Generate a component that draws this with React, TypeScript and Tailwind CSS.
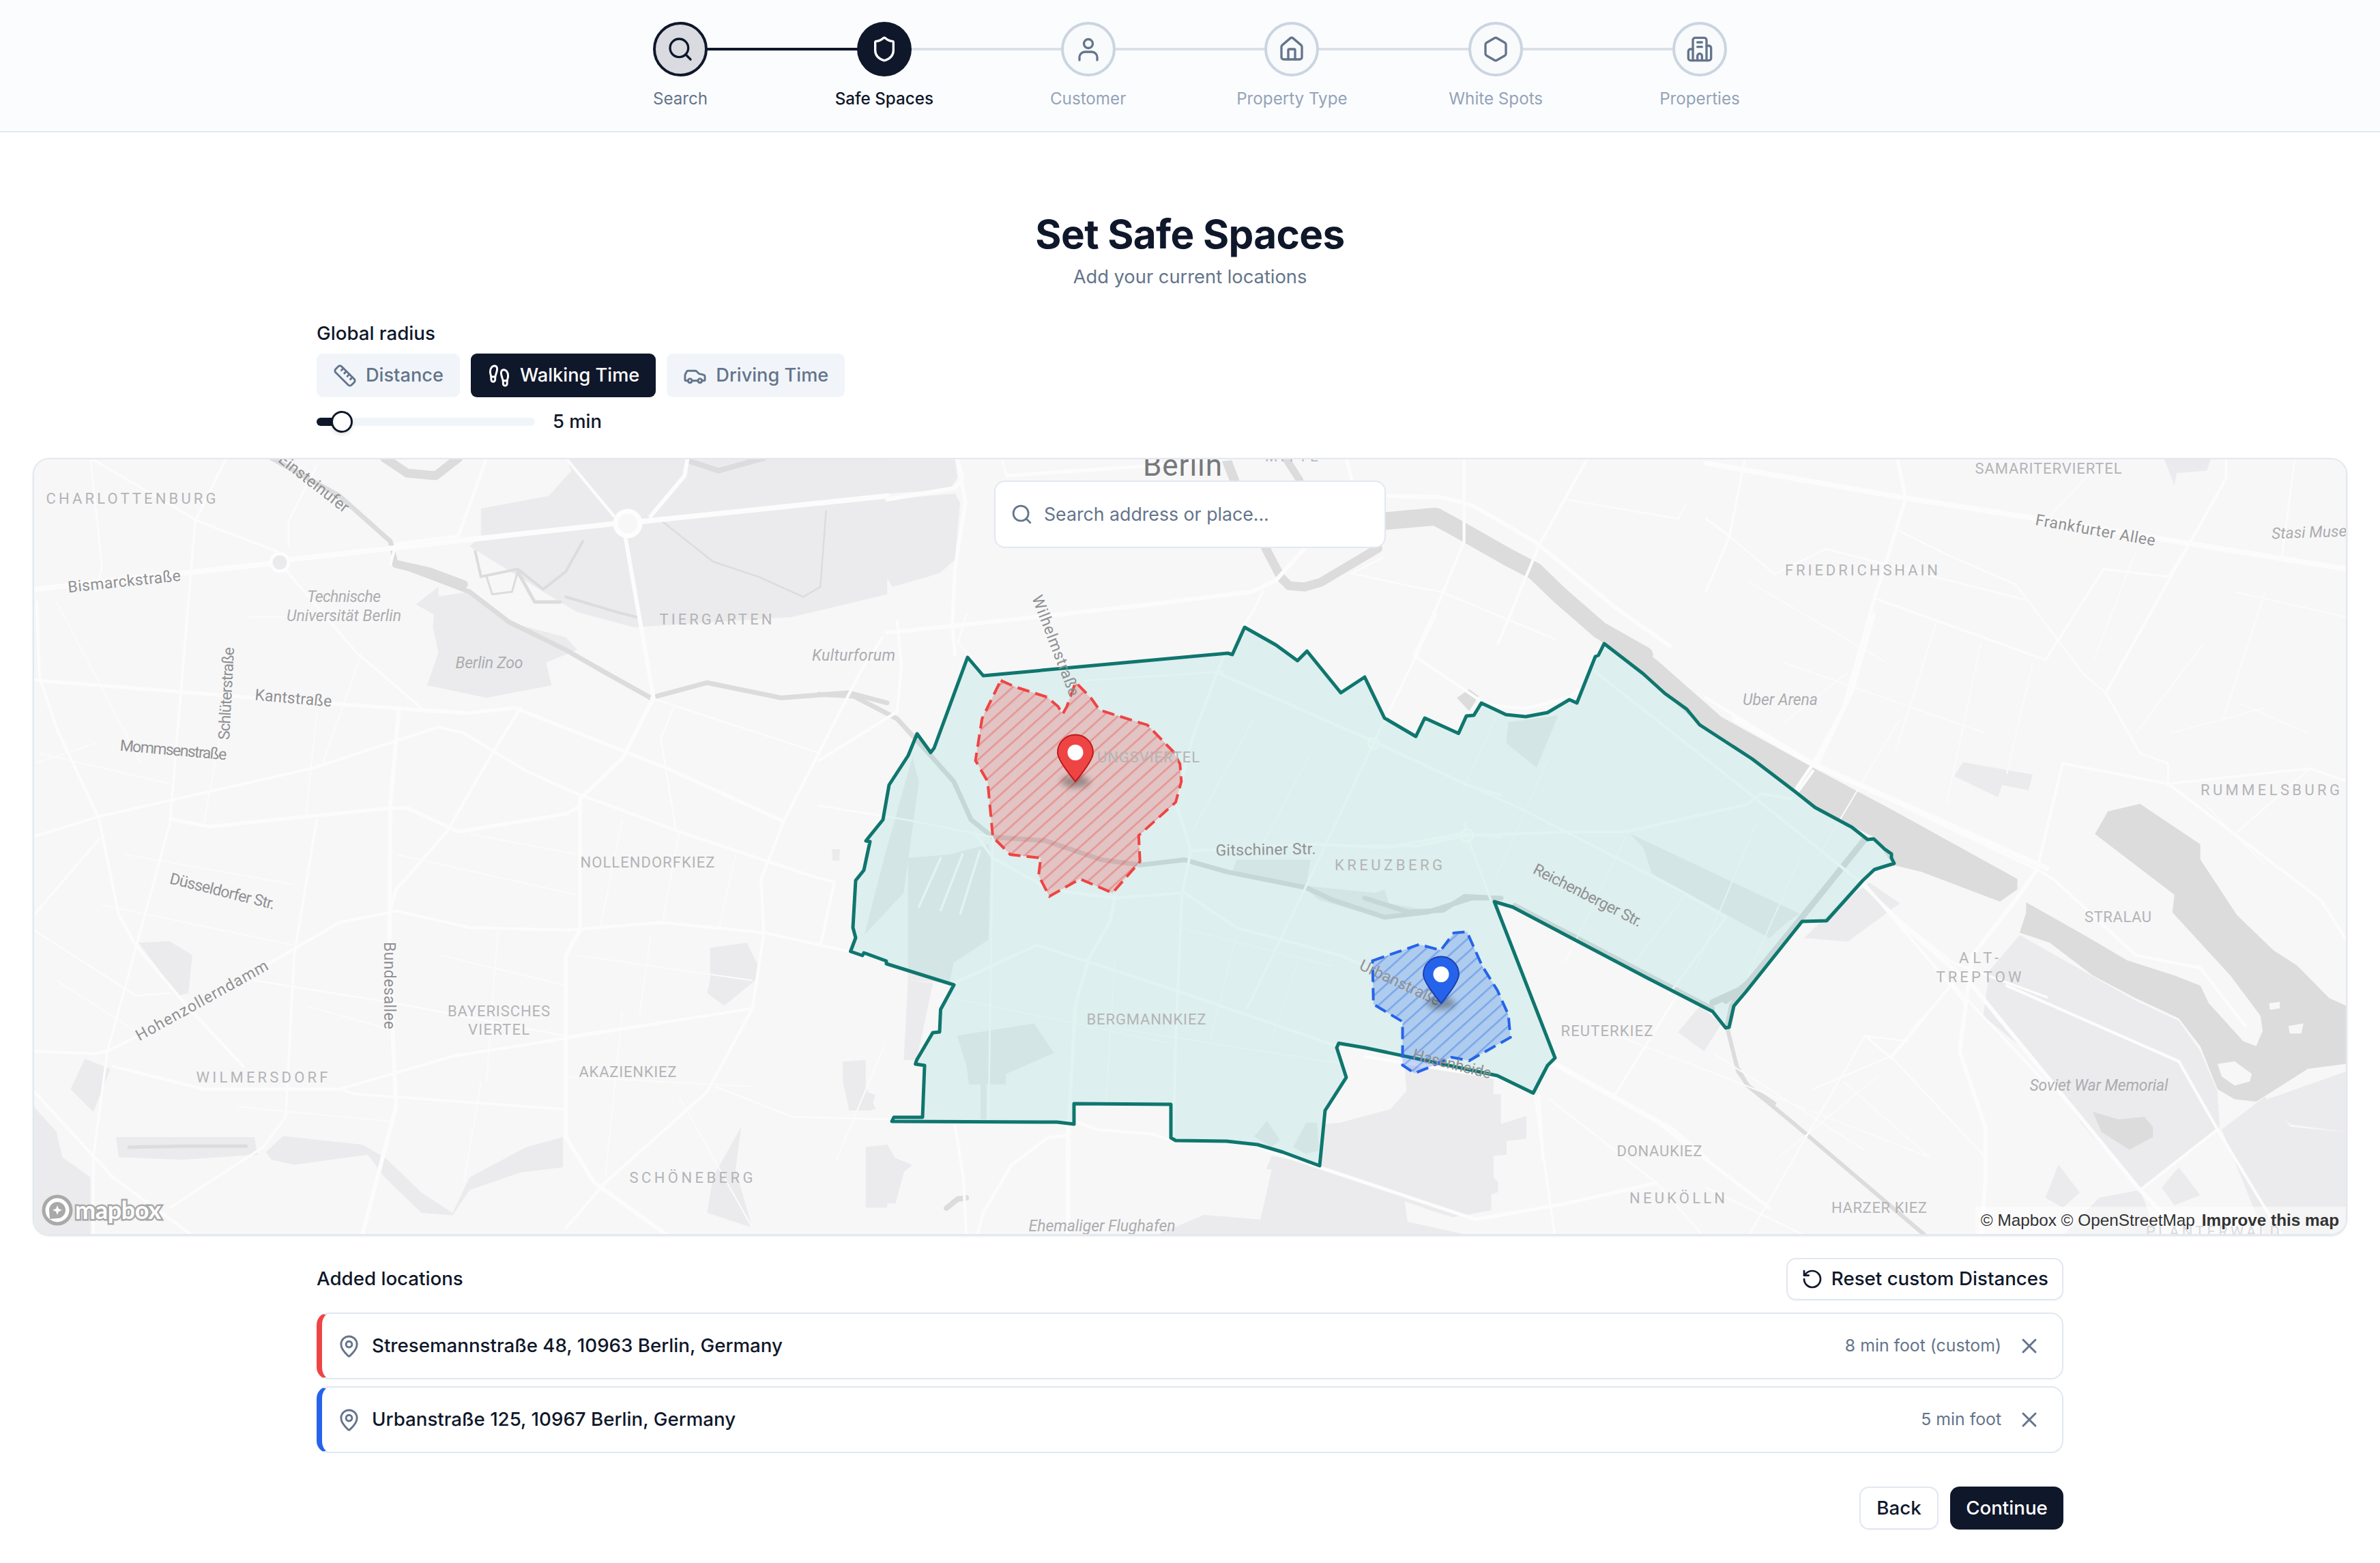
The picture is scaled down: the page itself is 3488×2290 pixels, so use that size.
import React from "react";
import { Car, Footprints, Hexagon, House, MapPin, RotateCcw, Ruler, Search, Shield, X } from "lucide-react";

// each zoomed crop of the map had its own scale, points are kept in those crop coordinates
const spaces: Record<string, number[]> = {
  w: [0, 660, 1.206, 1.352],
  e: [2500, 660, 1.587, 1.352],
  c: [1200, 900, 1.568, 1.96],
  r: [2000, 900, 1.568, 1.96],
  t: [1300, 660, 1.3067, 3],
  b: [1300, 1560, 1.206, 3],
};

const path = (s: string, pts: string, close = false) => {
  const [ox, oy, sx, sy] = spaces[s];
  const out = pts
    .trim()
    .split(/\s+/)
    .map((p) => {
      const [x, y] = p.split(",").map(Number);
      return `${(ox + x / sx).toFixed(1)} ${(oy + y / sy).toFixed(1)}`;
    });
  return "M" + out.join("L") + (close ? "Z" : "");
};

const parks: [string, string][] = [
  ["w", "850,170 850,115 970,90 1010,40 1000,15 1568,15 1568,285 1400,330 1120,350 1020,320 960,280 830,190"],
  ["w", "770,290 830,280 900,340 1000,370 1020,395 965,420 975,465 860,490 755,465 775,400 765,350"],
  ["w", "735,305 775,270 775,330"],
  ["w", "245,975 300,972 340,1000 333,1075 315,1080"],
  ["w", "1255,985 1320,975 1340,1020 1340,1045 1280,1100 1250,1075 1255,1050"],
  ["w", "1490,1220 1530,1208 1530,1260 1548,1305 1500,1305"],
  ["w", "205,1360 450,1360 455,1395 320,1405 210,1400"],
  ["w", "470,1390 500,1358 640,1375 680,1400 745,1470 800,1510 830,1440 930,1380 995,1360 995,1420 920,1430 830,1465 800,1515 745,1510 680,1440 650,1395 520,1415 480,1405"],
  ["w", "125,1265 150,1205 195,1225 165,1310"],
  ["w", "1260,1440 1310,1340 1300,1425 1330,1540 1250,1510"],
  ["w", "60,1300 100,1350 110,1400 160,1440 160,1555 60,1555"],
  ["w", "1470,790 1485,790 1483,812 1472,812"],
  ["w", "1530,1380 1568,1375 1568,1500 1530,1500"],
  ["t", "0,40 130,40 135,120 120,170 0,190"],
  ["t", "0,215 130,190 140,230 130,480 100,540 10,600 0,560"],
  ["c", "105,920 150,700 215,410 230,480 195,800"],
  ["c", "205,1050 205,700 300,690 390,660 395,700 390,935 310,1000 300,1060"],
  ["c", "318,1210 495,1175 540,1260 430,1320 430,1350 345,1350 340,1300"],
  ["c", "372,1350 385,1350 385,1450 372,1450"],
  ["c", "1090,1530 1120,1460 1145,1460 1150,1540 1120,1550"],
  ["c", "1000,1500 1030,1455 1060,1510 1040,1530"],
  ["c", "960,705 1130,705 1120,780 1280,800 1300,790 1310,830 1400,850 1300,875 1150,820 1120,790 950,740"],
  ["c", "205,1050 262,1060 225,1280 195,1280"],
  ["c", "55,1285 105,1280 105,1370 130,1380 120,1425 70,1425 55,1340"],
  ["c", "35,675 45,675 48,708 30,705"],
  ["b", "915,0 1072,50 1072,130 1085,130 1085,260 1130,225 1130,325 1095,335 1095,395 1072,400 1072,495 1080,515 1080,560 1068,570 1068,640 1000,670 960,640 915,600 920,690 1020,745 480,745 560,660 660,680 680,460 670,460 680,400 765,445 775,260 800,255 890,195 918,115"],
  ["b", "0,350 15,410 45,440 30,470 15,610 0,610"],
  ["r", "610,630 1000,860 970,885 930,930 660,745 640,670"],
  ["r", "330,310 445,290 395,440 325,370"],
  ["r", "1075,850 1160,770 1230,830 1110,940 1010,930"],
  ["r", "720,1200 770,1125 820,1175 780,1255"],
  ["r", "1355,465 1375,425 1535,460 1525,505 1465,490 1455,525"],
  ["e", "645,1120 660,1030 730,960 1000,1090 1100,1130 1150,1190 1190,1270 1195,1340 1010,1465 880,1340 760,1200"],
  ["e", "1200,1345 1300,1280 1360,1340 1490,1350 1490,1555 1300,1555"],
  ["e", "1065,15 1175,15 1165,40 1095,45 1090,70"],
  ["e", "820,1415 870,1470 830,1500 790,1480"],
  ["e", "915,1480 1010,1465 1050,1555 830,1555"],
  ["e", "1060,1460 1100,1420 1150,1475 1090,1495"],
  ["e", "1290,1290 1490,1230 1490,1350 1360,1335"],
];

const water: [string, string][] = [
  ["r", "475,0 520,0 670,130 820,295 1030,440 1210,560 1500,760 1500,790 1460,825 1280,740 1215,720 1170,640 1035,555 890,415 770,318 690,228 640,170 550,85"],
  ["e", "745,895 880,960 980,1010 1090,1040 1150,1060 1170,1095 1250,1170 1280,1180 1295,1150 1290,1120 1220,1040 1085,915 1090,880 905,760 935,715 1010,700 1150,780 1150,810 1235,920 1320,990 1375,1020 1450,1085 1490,1100 1490,1215 1400,1225 1280,1290 1230,1285 1190,1265 1150,1180 1100,1125 1000,1085 900,1040 800,975 730,955 745,915"],
  ["e", "900,1310 960,1325 1020,1320 1040,1340 1040,1360 985,1385 920,1350"],
  ["r", "212,240 240,215 262,235 240,278"],
];

const holes: [string, string][] = [
  ["e", "1190,1215 1230,1210 1270,1235 1265,1250 1230,1258 1200,1240"],
  ["e", "1310,1095 1335,1092 1335,1105 1312,1108"],
  ["e", "1355,1140 1390,1135 1385,1155 1358,1155"],
];

// gray lines: canals and the ring railway
const canals: [string, string, number][] = [
  ["w", "480,15 600,90 690,180 700,225 760,250 830,280 900,340 1000,395 1070,440 1150,490 1250,460 1380,490 1500,480 1568,500", 7],
  ["w", "680,15 720,45 770,50 810,15", 13],
  ["w", "1215,20 1270,40 1350,15", 8],
  ["w", "700,225 760,240 820,265", 12],
  ["w", "1170,140 1260,220 1340,250 1420,290 1450,270 1460,120", 2.5],
  ["w", "840,200 850,250 915,235 960,275 1000,240 1030,180", 4],
  ["w", "860,250 870,285 905,280 915,240", 3],
  ["w", "915,240 945,300 990,300", 5],
  ["w", "1000,290 1090,320 1125,330", 4],
  ["w", "228,1380 320,1378 435,1378", 5],
  ["c", "0,230 80,235 180,300 260,410 310,480 350,590 400,640 520,650 650,705 740,720 840,705 940,740 1120,785 1180,820 1300,870 1400,855 1500,815 1568,815", 7],
  ["r", "0,815 100,855 180,850 230,810 300,815", 7],
  ["t", "955,310 1050,290 1090,340 1190,470 1240,530 1290,640 1365,790 1450,900", 26],
  ["t", "725,430 755,560 770,595 800,600 830,580 940,430", 13],
  ["t", "650,40 665,130", 14],
  ["t", "765,40 790,130", 11],
  ["r", "1150,645 1005,870 880,1060 830,1110", 9],
  ["r", "345,835 800,1132", 6],
  ["r", "800,1115 870,1075 845,1125 835,1185", 10],
  ["e", "50,1145 75,1230 100,1260 200,1330 510,1555", 6],
  ["b", "105,630 125,590 140,585", 8],
  ["b", "1505,20 1520,90 1568,170", 6],
];

// [space, points, width]
const roads: [string, string, number][] = [
  ["w", "60,275 470,225 520,215 1085,145 1140,140 1568,90", 9],
  ["w", "65,300 70,450 100,550 175,730 210,920 240,980 330,1100 430,1220", 5],
  ["w", "60,455 450,490 750,515 830,520 910,510 1180,630 1385,735", 6],
  ["w", "400,15 345,140 300,740 190,1190", 4],
  ["w", "60,765 175,725 550,630 775,548 820,560 930,635 1020,680 1130,725 1200,755 1440,845 1475,855 1450,980", 5],
  ["w", "300,730 370,745 690,708 720,708 810,755 1000,720 1025,705", 6],
  ["w", "705,510 690,700 688,1000 700,1300 640,1555", 7],
  ["w", "1105,170 1155,490 1100,610 1025,690 1025,950 1000,1000 1000,1360 1050,1450 1180,1555", 7],
  ["w", "920,510 870,600 790,755 700,870 690,910", 5],
  ["w", "60,920 175,770", 4],
  ["w", "60,950 240,1080 300,1075", 3],
  ["w", "60,1190 165,1195 190,1190 350,1100 470,1020 600,935 700,912 830,945 1000,950 1170,935 1350,955 1510,995", 5],
  ["w", "200,1220 360,1265 600,1265 800,1200 1330,1105 1350,955 1345,850 1385,735 1520,440 1560,370", 5],
  ["w", "600,1265 630,1275 1000,1305", 4],
  ["w", "1330,1105 1250,1270 1070,1450 1000,1540", 5],
  ["w", "450,1050 700,1095 1000,1160", 3],
  ["w", "560,730 520,1000 505,1320 465,1380 300,1500", 4],
  ["w", "60,1270 200,1440 340,1555", 5],
  ["w", "500,230 630,400 750,515", 4],
  ["w", "510,190 510,140 560,30", 3],
  ["w", "160,15 350,140 490,200", 4],
  ["w", "160,15 180,230 170,280", 3],
  ["w", "690,225 700,185 810,170 860,15", 5],
  ["w", "1000,15 1085,130", 5],
  ["w", "1150,130 1210,50 1215,15", 7],
  ["w", "1190,510 1168,570 1195,755", 3],
  ["w", "1150,490 1450,600", 3],
  ["w", "1265,1260 1400,1320 1568,1325", 3],
  ["w", "190,1190 165,1400 165,1555", 4],
  ["w", "1000,1160 1330,1105", 2],
  ["t", "0,215 130,165 145,120 135,40", 7],
  ["t", "135,40 150,230 130,520 125,760 130,900", 6],
  ["t", "0,800 130,770 490,680 700,620 745,570 800,430", 7],
  ["t", "230,110 490,70 660,35", 6],
  ["t", "220,40 230,120", 3],
  ["t", "960,200 1060,205 1120,240 1240,400 1400,700 1500,860", 7],
  ["t", "1105,40 1105,400 1060,650 1010,900", 5],
  ["t", "1340,40 1250,410 1170,850", 5],
  ["t", "880,40 890,130", 6],
  ["t", "720,620 700,710 680,780", 4],
  ["t", "950,470 890,540 1010,600 1060,620 1280,830", 3],
  ["t", "1530,240 1515,300 1300,215", 3],
  ["c", "920,170 1275,365 1490,490 1568,520", 5],
  ["c", "1275,370 1120,780 985,1130", 4],
  ["c", "850,680 1000,670 1140,660 1300,670 1480,630 1568,640", 5],
  ["c", "930,120 860,350 820,540 855,680 835,800 820,1220 815,1500", 5],
  ["c", "680,810 670,880 620,990 590,1120 575,1440 575,1568", 6],
  ["c", "0,550 200,590 400,640", 3],
  ["c", "310,1060 500,950 820,1080 1190,1240", 5],
  ["c", "360,630 400,700 530,790 680,815 840,800 960,900 1200,980 1420,1100", 5],
  ["c", "180,20 190,150 180,280 0,420", 5],
  ["c", "340,0 320,80 380,170", 3],
  ["c", "400,640 390,1450", 3],
  ["c", "610,190 930,165", 3],
  ["c", "280,700 230,840", 4],
  ["c", "330,690 280,850", 4],
  ["c", "370,680 325,860", 4],
  ["r", "0,355 370,565 720,790 830,870 700,1090", 4],
  ["r", "165,0 20,370", 4],
  ["r", "0,665 120,665 235,635 470,625 600,625 880,545 910,515 980,530", 5],
  ["r", "230,600 235,635 290,820", 4],
  ["r", "115,120 280,260 370,270 470,240 500,210 545,95", 5],
  ["r", "530,165 890,520 1130,760 1230,880", 5],
  ["r", "850,300 1030,430 1300,580 1568,730", 9],
  ["r", "1040,430 1120,220 1170,0", 7],
  ["r", "995,510 1030,450", 5],
  ["r", "720,1090 570,1390", 4],
  ["r", "1230,880 1350,1000 1568,1100", 4],
  ["r", "440,1290 710,1480 790,1568", 6],
  ["r", "400,1380 410,1568", 5],
  ["r", "1150,1210 1210,1275 1350,1060 1568,1350", 4],
  ["r", "0,1270 300,1330", 5],
  ["b", "330,245 370,285 470,305 505,335", 5],
  ["b", "320,250 320,745", 7],
  ["b", "120,260 135,500 140,745", 5],
  ["b", "320,310 285,320 220,440 170,650 160,745", 5],
  ["b", "655,360 1040,680 1200,610 1360,520", 6],
  ["b", "1180,0 1360,250 1560,630", 6],
  ["b", "1145,130 1160,400 1180,745", 4],
  ["b", "1170,150 1360,520 1440,745", 3],
  ["e", "0,25 470,95 770,135 1490,235", 9],
  ["e", "445,15 465,95 390,300 320,510 250,620 210,670", 6],
  ["e", "0,490 250,620 770,830 810,850 1000,1000 1150,1025 1255,1140", 5],
  ["e", "770,830 730,880 620,1000 590,1190 650,1340 650,1450 640,1555", 7],
  ["e", "445,930 620,1060 1010,1465 1110,1555", 7],
  ["e", "360,850 570,1060 600,1090", 5],
  ["e", "770,830 830,620 1075,660 1430,890 1490,970", 5],
  ["e", "1010,600 1075,620 1075,665", 3],
  ["e", "930,480 1010,600", 4],
  ["e", "1210,55 930,480", 5],
  ["e", "450,160 570,210 720,265 880,445 930,480", 3],
  ["e", "0,135 55,170 0,280", 4],
  ["e", "90,20 55,170", 4],
  ["e", "55,170 160,245 280,195 530,250 740,295", 3],
  ["e", "400,295 790,415 925,235 1075,250 1125,185 1210,55 1210,20", 4],
  ["e", "1075,660 1130,655 1405,630 1490,655", 4],
  ["e", "1230,760 1405,630", 3],
  ["e", "700,1060 1100,1210 1190,1345 1300,1500 1340,1555", 5],
  ["e", "1190,1345 1010,1465", 5],
  ["e", "0,1460 230,1555", 3],
  ["e", "250,1265 430,1200 570,1060", 3],
  ["e", "430,1200 650,1400", 3],
  ["e", "100,1555 370,1160 470,1170", 3],
  ["e", "1370,15 1340,210", 3],
];

// thin side streets, only for texture
const minor: [string, string][] = [
  ["w", "100,300 250,620"], ["w", "440,330 700,330"], ["w", "70,600 300,660"], ["w", "400,500 360,740"], ["w", "560,520 540,730"],
  ["w", "640,400 570,620"], ["w", "830,760 1020,800"], ["w", "700,800 1020,880"], ["w", "880,950 860,1250"], ["w", "780,1000 1000,1060"],
  ["w", "1200,760 1170,940"], ["w", "1100,730 1060,950"], ["w", "1300,800 1270,950"], ["w", "1020,1000 1330,1050"], ["w", "1150,960 1130,1120"],
  ["w", "220,800 520,860"], ["w", "180,900 520,980"], ["w", "100,1050 240,1150"], ["w", "540,1100 700,1150"], ["w", "420,1300 700,1330"],
  ["w", "850,1250 820,1450"], ["w", "1000,1240 1330,1260"], ["w", "1100,1110 1070,1440"], ["w", "1200,1280 1330,1540"], ["w", "60,620 170,580"],
  ["c", "150,1240 40,1568"], ["c", "680,1000 660,1400"], ["c", "690,1190 1200,1290"], ["c", "300,1100 800,1230"], ["c", "830,900 1180,1010"],
  ["c", "1000,300 860,620"], ["c", "1130,400 1020,660"], ["c", "480,300 420,620"], ["c", "600,220 560,560"], ["c", "960,920 900,1220"], ["c", "1100,1000 1040,1220"],
  ["r", "600,640 460,1000"], ["r", "740,800 620,1000"], ["r", "900,600 760,1020"], ["r", "1000,700 880,1040"], ["r", "300,300 220,520"], ["r", "420,420 300,760"],
  ["r", "560,1200 1300,1560"], ["r", "800,1260 1150,1540"], ["r", "1230,300 1040,700"], ["r", "1400,1000 1250,1200"],
  ["e", "100,260 420,420"], ["e", "180,420 650,560"], ["e", "540,330 440,600"], ["e", "640,380 560,700"], ["e", "760,420 700,640"],
  ["e", "900,40 800,130"], ["e", "1000,200 900,420"], ["e", "1160,380 1000,560"], ["e", "1300,280 1200,540"], ["e", "1230,280 1490,330"],
  ["e", "1080,560 1300,510"], ["e", "1160,700 1300,820"], ["e", "320,1250 520,1400"], ["e", "170,1400 400,1240"], ["e", "180,540 330,440"], ["e", "1240,500 1400,560"],
];

const tealArea = [
  [1441, 990], [1799.5, 957], [1806, 959], [1824, 919], [1870, 945], [1901.5, 968], [1915.5, 954], [1965, 1015], [2000, 992], [2029, 1052],
  [2075, 1079], [2088, 1052], [2137.5, 1074.5], [2149, 1049], [2160, 1048], [2171, 1030], [2207, 1047], [2236, 1050], [2268, 1044], [2300, 1025],
  [2311, 1030], [2338, 962], [2342.5, 960], [2351, 943], [2408, 987], [2440, 1016], [2472, 1039], [2491, 1062], [2568, 1112], [2631, 1160],
  [2660, 1183], [2714, 1212], [2737, 1230], [2746, 1229], [2762, 1244], [2772, 1251], [2772, 1257], [2776, 1265], [2747, 1274], [2730, 1290],
  [2677, 1349], [2641, 1350], [2558, 1454], [2541, 1474], [2534, 1505], [2529, 1506], [2510, 1482], [2414.5, 1433], [2274, 1359], [2217, 1329],
  [2190, 1321], [2279, 1550], [2268, 1561], [2247, 1601.5], [2194.5, 1576], [2000, 1535], [1962, 1528.5], [1959, 1535], [1973, 1578.6], [1942, 1627],
  [1934, 1708], [1880, 1688], [1843, 1677], [1797.5, 1672], [1723, 1671], [1716, 1667], [1716, 1618], [1574, 1617], [1574, 1647], [1549, 1644],
  [1307, 1643], [1310, 1637], [1352, 1637], [1355, 1561], [1341.6, 1559], [1343.5, 1553], [1367, 1513], [1377, 1512], [1378.5, 1479], [1398, 1443],
  [1299, 1412], [1299, 1408], [1266, 1396], [1264, 1400], [1246.5, 1394], [1254, 1374], [1250, 1359], [1254, 1290], [1266, 1275], [1275, 1233],
  [1269, 1232], [1294, 1201], [1303, 1150], [1331, 1107], [1344, 1075], [1364, 1102.5], [1369, 1096], [1418, 963],
];
const tealPath = "M" + tealArea.map((p) => p.join(" ")).join("L") + "Z";

const redArea = "418,190 450,208 525,238 550,265 560,287 570,265 590,195 625,240 645,275 755,318 815,395 830,430 833,480 820,540 735,635 738,710 675,800 600,760 530,810 505,750 510,700 440,690 400,640 388,480 360,420 375,300";
const blueArea = "18,995 125,948 175,965 205,915 235,912 270,1010 305,1080 330,1150 335,1215 240,1282 200,1272 150,1300 115,1318 87,1295 87,1170 20,1120";

type Label = { t: string; x: number; y: number; k: "place" | "street" | "poi"; r?: number; w?: number; size?: number };

const labels: Label[] = [
  { t: "CHARLOTTENBURG", x: 192, y: 730, k: "place", w: 249 },
  { t: "Bismarckstraße", x: 182, y: 852, k: "street", r: -6, w: 166 },
  { t: "Technische", x: 504, y: 874, k: "poi", w: 108 },
  { t: "Universität Berlin", x: 504, y: 902, k: "poi", w: 168 },
  { t: "TIERGARTEN", x: 1049, y: 907, k: "place", w: 165 },
  { t: "Berlin Zoo", x: 717, y: 971, k: "poi", w: 99 },
  { t: "Kulturforum", x: 1251, y: 960, k: "poi", w: 122 },
  { t: "Kantstraße", x: 430, y: 1023, k: "street", r: 5, w: 113 },
  { t: "Schlüterstraße", x: 332, y: 1016, k: "street", r: -87, w: 136 },
  { t: "Mommsenstraße", x: 254, y: 1099, k: "street", r: 5, w: 157 },
  { t: "Einsteinufer", x: 460, y: 708, k: "street", r: 38, w: 124 },
  { t: "NOLLENDORFKIEZ", x: 949, y: 1263, k: "place", w: 197, size: 21 },
  { t: "Düsseldorfer Str.", x: 326, y: 1306, k: "street", r: 14, w: 158 },
  { t: "Bundesallee", x: 570, y: 1444, k: "street", r: 90, w: 128 },
  { t: "Hohenzollerndamm", x: 296, y: 1466, k: "street", r: -29, w: 218 },
  { t: "BAYERISCHES", x: 731, y: 1481, k: "place", w: 150, size: 21 },
  { t: "VIERTEL", x: 731, y: 1508, k: "place", w: 90, size: 21 },
  { t: "WILMERSDORF", x: 384, y: 1578, k: "place", w: 193 },
  { t: "AKAZIENKIEZ", x: 920, y: 1570, k: "place", w: 143, size: 21 },
  { t: "SCHÖNEBERG", x: 1013, y: 1725, k: "place", w: 181 },
  { t: "Wilhelmstraße", x: 1547, y: 946, k: "street", r: 69, w: 156 },
  { t: "UNGSVIERTEL", x: 1683, y: 1109, k: "place", w: 150, size: 21 },
  { t: "Gitschiner Str.", x: 1855, y: 1245, k: "street", r: -1, w: 147, size: 25 },
  { t: "KREUZBERG", x: 2035, y: 1267, k: "place", w: 158 },
  { t: "BERGMANNKIEZ", x: 1680, y: 1493, k: "place", w: 175, size: 21 },
  { t: "Urbanstraße", x: 2052, y: 1440, k: "street", r: 25, w: 128 },
  { t: "Hasenheide", x: 2128, y: 1559, k: "street", r: 14, w: 118 },
  { t: "Reichenberger Str.", x: 2327, y: 1312, k: "street", r: 27, w: 176 },
  { t: "REUTERKIEZ", x: 2355, y: 1510, k: "place", w: 135, size: 21 },
  { t: "Uber Arena", x: 2609, y: 1025, k: "poi", w: 110 },
  { t: "DONAUKIEZ", x: 2432, y: 1686, k: "place", w: 125, size: 21 },
  { t: "NEUKÖLLN", x: 2458, y: 1755, k: "place", w: 140 },
  { t: "Ehemaliger Flughafen", x: 1615, y: 1796, k: "poi", w: 215 },
  { t: "HARZER KIEZ", x: 2754, y: 1769, k: "place", w: 140, size: 21 },
  { t: "SAMARITERVIERTEL", x: 3002, y: 686, k: "place", w: 215, size: 21 },
  { t: "Frankfurter Allee", x: 3071, y: 777, k: "street", r: 10, w: 178 },
  { t: "FRIEDRICHSHAIN", x: 2728, y: 835, k: "place", w: 224 },
  { t: "RUMMELSBURG", x: 3327, y: 1157, k: "place", w: 204 },
  { t: "STRALAU", x: 3104, y: 1343, k: "place", w: 98, size: 21 },
  { t: "ALT-", x: 2900, y: 1403, k: "place", w: 58 },
  { t: "TREPTOW", x: 2900, y: 1431, k: "place", w: 125 },
  { t: "Soviet War Memorial", x: 3076, y: 1590, k: "poi", w: 203 },
  { t: "PLANTERWALD", x: 3243, y: 1804, k: "place", w: 196 },
];

const labelStyle = {
  place: "fill-[#b4b4b6] text-[22px]",
  street: "fill-[#909092] text-[23px]",
  poi: "fill-[#acacae] italic text-[23px]",
};

const Pin = ({ x, tipY, fill, edge }: { x: number; tipY: number; fill: string; edge: string }) => (
  <g transform={`translate(${x - 27} ${tipY - 69})`}>
    <ellipse cx="27" cy="69" rx="21" ry="9" className="fill-black/30 blur-[4px]" />
    <path d="M27 69C27 69 1 39 1 26.5A26 26 0 0 1 53 26.5C53 39 27 69 27 69Z" fill={fill} stroke={edge} strokeWidth="2" />
    <circle cx="27" cy="26.5" r="11.5" fill="white" />
  </g>
);

const MapDrawing = () => (
  <svg viewBox="50 673 3388 1135" className="block w-[3388px] h-[1135px] bg-[#f7f7f8] font-['Roboto',sans-serif]">
    <defs>
      <pattern id="redHatch" width="15" height="15" patternUnits="userSpaceOnUse" patternTransform="rotate(-42)">
        <rect width="15" height="2.6" fill="#ef4444" fillOpacity="0.36" />
      </pattern>
      <pattern id="blueHatch" width="15" height="15" patternUnits="userSpaceOnUse" patternTransform="rotate(-42)">
        <rect width="15" height="2.6" fill="#2563eb" fillOpacity="0.36" />
      </pattern>
    </defs>

    {parks.map(([s, p], i) => (
      <path key={i} d={path(s, p, true)} fill="#ebebed" />
    ))}
    {water.map(([s, p], i) => (
      <path key={i} d={path(s, p, true)} fill="#dcdcdd" />
    ))}
    {holes.map(([s, p], i) => (
      <path key={i} d={path(s, p, true)} fill="#f7f7f8" />
    ))}
    {canals.map(([s, p, w], i) => (
      <path key={i} d={path(s, p)} fill="none" stroke="#dcdcdd" strokeWidth={w} strokeLinejoin="round" strokeLinecap="round" />
    ))}
    {minor.map(([s, p], i) => (
      <path key={i} d={path(s, p)} fill="none" stroke="#fbfbfb" strokeWidth="2" />
    ))}
    {roads.map(([s, p, w], i) => (
      <path key={i} d={path(s, p)} fill="none" stroke="#fcfcfc" strokeWidth={w * 0.85} strokeLinejoin="round" strokeLinecap="round" />
    ))}
    {/* roundabouts */}
    <circle cx="920" cy="767" r="18" fill="#f7f7f8" stroke="#fdfdfd" strokeWidth="7" />
    <circle cx="410" cy="824" r="13" fill="#ebebed" stroke="#fdfdfd" strokeWidth="5" />
    <circle cx="2013" cy="1089" r="8" fill="none" stroke="#fdfdfd" strokeWidth="3" />
    <circle cx="2150" cy="1224" r="9" fill="none" stroke="#fdfdfd" strokeWidth="3" />

    {/* Berlin and Mitte are cut by the top edge */}
    <text x="1733" y="697" textAnchor="middle" textLength="116" className="fill-[#77787a] text-[44px]">Berlin</text>
    <text x="1893" y="676" textAnchor="middle" textLength="78" className="fill-[#b4b4b6] text-[21px]">MITTE</text>

    <path d={tealPath} fill="#14b8a6" fillOpacity="0.11" stroke="#0f766e" strokeWidth="5" strokeLinejoin="round" />

    <path d={path("c", redArea, true)} fill="#ef4444" fillOpacity="0.25" />
    <path d={path("c", redArea, true)} fill="url(#redHatch)" stroke="#ef4444" strokeWidth="4" strokeDasharray="18 9" />
    <path d={path("r", blueArea, true)} fill="#2563eb" fillOpacity="0.25" />
    <path d={path("r", blueArea, true)} fill="url(#blueHatch)" stroke="#2563eb" strokeWidth="4" strokeDasharray="18 9" />

    {labels.map((l) => (
      <text
        key={l.t}
        x={l.x}
        y={l.y}
        textAnchor="middle"
        dominantBaseline="central"
        textLength={l.w}
        transform={l.r ? `rotate(${l.r} ${l.x} ${l.y})` : undefined}
        className={labelStyle[l.k]}
        fontSize={l.size}
      >
        {l.t}
      </text>
    ))}
    <text x="3329" y="782" transform="rotate(-2 3329 782)" dominantBaseline="central" className="fill-[#acacae] italic text-[23px]">Stasi Museum</text>

    <Pin x={1576} tipY={1145} fill="#ef4444" edge="#b91c1c" />
    <Pin x={2112} tipY={1470} fill="#2563eb" edge="#1e40af" />

    {/* mapbox mark */}
    <circle cx="84" cy="1773" r="20" fill="white" stroke="#a9a9a9" strokeWidth="5" />
    <path d="M72 1773a12 12 0 1 1 12 12l-11 1Z" fill="#a9a9a9" />
    <path d="M84 1766l2 5 5 2-5 2-2 5-2-5-5-2 5-2Z" fill="white" />
    <text x="110" y="1786" className="fill-white stroke-[#a9a9a9] stroke-[5px] [paint-order:stroke] text-[36px] font-bold font-['Lato',sans-serif]" textLength="126">mapbox</text>
  </svg>
);

const steps = [
  { name: "Search", state: "done" },
  { name: "Safe Spaces", state: "active" },
  { name: "Customer", state: "todo" },
  { name: "Property Type", state: "todo" },
  { name: "White Spots", state: "todo" },
  { name: "Properties", state: "todo" },
];

const StepIcon = ({ name }: { name: string }) => {
  if (name === "Search") return <Search size={40} />;
  if (name === "Safe Spaces") return <Shield size={40} />;
  if (name === "Property Type") return <House size={40} />;
  if (name === "White Spots") return <Hexagon size={40} />;
  if (name === "Customer")
    return (
      <svg viewBox="0 0 40 40" width="40" height="40" fill="none" stroke="currentColor" strokeWidth="3.3" strokeLinecap="round">
        <circle cx="20" cy="12" r="6.5" />
        <path d="M7 36v-4a8 8 0 0 1 8-8h10a8 8 0 0 1 8 8v4" />
      </svg>
    );
  return (
    <svg viewBox="0 0 24 24" width="40" height="40" fill="none" stroke="currentColor" strokeWidth="2" strokeLinecap="round" strokeLinejoin="round">
      <path d="M6 22V4a2 2 0 0 1 2-2h8a2 2 0 0 1 2 2v18Z" />
      <path d="M6 12H4a2 2 0 0 0-2 2v6a2 2 0 0 0 2 2h2" />
      <path d="M18 9h2a2 2 0 0 1 2 2v9a2 2 0 0 1-2 2h-2" />
      <path d="M10 6h4" />
      <path d="M10 10h4" />
      <path d="M10 22v-4a2 2 0 0 1 4 0v4" />
    </svg>
  );
};

const Stepper = () => (
  <header className="h-[194px] box-border bg-[#fbfcfe] border-b-2 border-[#e2e8f0] flex justify-center pt-[32px]">
    {steps.map((step, i) => (
      <div key={step.name} className="relative w-[298.8px] flex flex-col items-center">
        {i < steps.length - 1 && (
          <div className={`absolute top-[38px] left-1/2 w-full h-[4px] ${i === 0 ? "bg-[#0f172a]" : "bg-[#dbe0e8]"}`} />
        )}
        <div
          className={`relative w-[80px] h-[80px] rounded-full flex items-center justify-center ${
            step.state === "done"
              ? "bg-[#d9dbe0] border-[4px] border-[#0f172a] text-[#0f172a]"
              : step.state === "active"
                ? "bg-[#0f172a] text-white"
                : "bg-[#f8fafc] border-[4px] border-[#cbd5e1] text-[#64748b]"
          }`}
        >
          <StepIcon name={step.name} />
        </div>
        <span
          className={`mt-[17px] text-[24.2px] leading-[32px] whitespace-nowrap ${
            step.state === "active" ? "text-[#0f172a] font-medium" : step.state === "done" ? "text-[#64748b]" : "text-[#94a3b8]"
          }`}
        >
          {step.name}
        </span>
      </div>
    ))}
  </header>
);

const modes = [
  { name: "Distance", icon: <Ruler size={35} /> },
  { name: "Walking Time", icon: <Footprints size={35} />, on: true },
  { name: "Driving Time", icon: <Car size={35} /> },
];

const places = [
  { name: "Stresemannstraße 48, 10963 Berlin, Germany", time: "8 min foot (custom)", edge: "border-l-[#ef4444]" },
  { name: "Urbanstraße 125, 10967 Berlin, Germany", time: "5 min foot", edge: "border-l-[#2563eb]" },
];

export default function App() {
  return (
    <div className="w-[3488px] h-[2290px] bg-white overflow-hidden font-['Inter',sans-serif] text-[#0f172a]">
      <Stepper />

      <div className="text-center pt-[109px]">
        <h1 className="text-[58.4px] leading-[80px] font-bold tracking-[-0.6px]">Set Safe Spaces</h1>
        <p className="text-[27.3px] leading-[46px] text-[#64748b]">Add your current locations</p>
      </div>

      <div className="w-[2560px] mx-auto mt-[37px]">
        <div className="text-[27.7px] leading-[44px] font-medium">Global radius</div>
        <div className="flex gap-[16px] mt-[8px]">
          {modes.map((m) => (
            <div
              key={m.name}
              className={`h-[64px] px-[24px] rounded-[9px] flex items-center gap-[13px] text-[27.2px] font-medium ${
                m.on ? "bg-[#0f172a] text-white" : "bg-[#f1f5f9] text-[#64748b]"
              }`}
            >
              {m.icon}
              {m.name}
            </div>
          ))}
        </div>
        <div className="flex items-center gap-[26px] mt-[14px] h-[44px]">
          <div className="relative w-[320px] h-[12px] rounded-full bg-[#f1f5f9]">
            <div className="w-[36px] h-full rounded-l-full bg-[#0f172a]" />
            <div className="absolute left-[21px] top-[-10px] w-[32px] h-[32px] rounded-full bg-white border-[3px] border-[#0f172a] shadow-md" />
          </div>
          <span className="text-[27.4px] font-medium">5 min</span>
        </div>
      </div>

      <div className="relative mx-[48px] mt-[31px] h-[1139px] box-border rounded-[24px] border-2 border-[#e2e8f0] overflow-hidden shadow-sm">
        <MapDrawing />
        <div className="absolute left-1/2 -translate-x-1/2 top-[31px] w-[574px] h-[99px] box-border bg-white rounded-[16px] border-2 border-[#e2e8f0] flex items-center pl-[22px] gap-[16px] text-[#64748b]">
          <Search size={33} />
          <span className="text-[26.7px]">Search address or place...</span>
        </div>
        <div className="absolute right-0 bottom-0 h-[40px] pl-[8px] pr-[10px] bg-white/50 flex items-center gap-[10px] font-['Liberation_Sans',sans-serif] text-[24.3px] text-[#333]">
          <span>© Mapbox © OpenStreetMap</span>
          <span className="font-bold">Improve this map</span>
        </div>
      </div>

      <div className="w-[2560px] mx-auto">
        <div className="flex items-center justify-between mt-[33px] h-[62px]">
          <span className="text-[27.7px] font-medium">Added locations</span>
          <div className="h-[62px] px-[20px] box-border border-2 border-[#e2e8f0] rounded-[14px] flex items-center gap-[12px] text-[27.7px] font-medium shadow-xs">
            <RotateCcw size={32} />
            Reset custom Distances
          </div>
        </div>

        <div className="flex flex-col gap-[10px] mt-[18px]">
          {places.map((p) => (
            <div
              key={p.name}
              className={`h-[98px] box-border flex items-center rounded-[18px] border-2 border-[#e2e8f0] border-l-[8px] ${p.edge} pl-[22px] pr-[30px]`}
            >
              <MapPin size={35} className="text-[#64748b]" />
              <span className="ml-[16px] text-[27.7px] font-medium">{p.name}</span>
              <span className="ml-auto text-[24.8px] text-[#64748b]">{p.time}</span>
              <X size={36} className="ml-[23px] text-[#64748b]" />
            </div>
          ))}
        </div>

        <div className="flex justify-end gap-[17px] mt-[49px]">
          <div className="h-[63px] w-[116px] box-border border-2 border-[#e2e8f0] rounded-[14px] flex items-center justify-center text-[27.7px] font-medium shadow-xs">Back</div>
          <div className="h-[63px] w-[166px] rounded-[14px] bg-[#0f172a] text-white flex items-center justify-center text-[27.7px] font-medium">Continue</div>
        </div>
      </div>
    </div>
  );
}
